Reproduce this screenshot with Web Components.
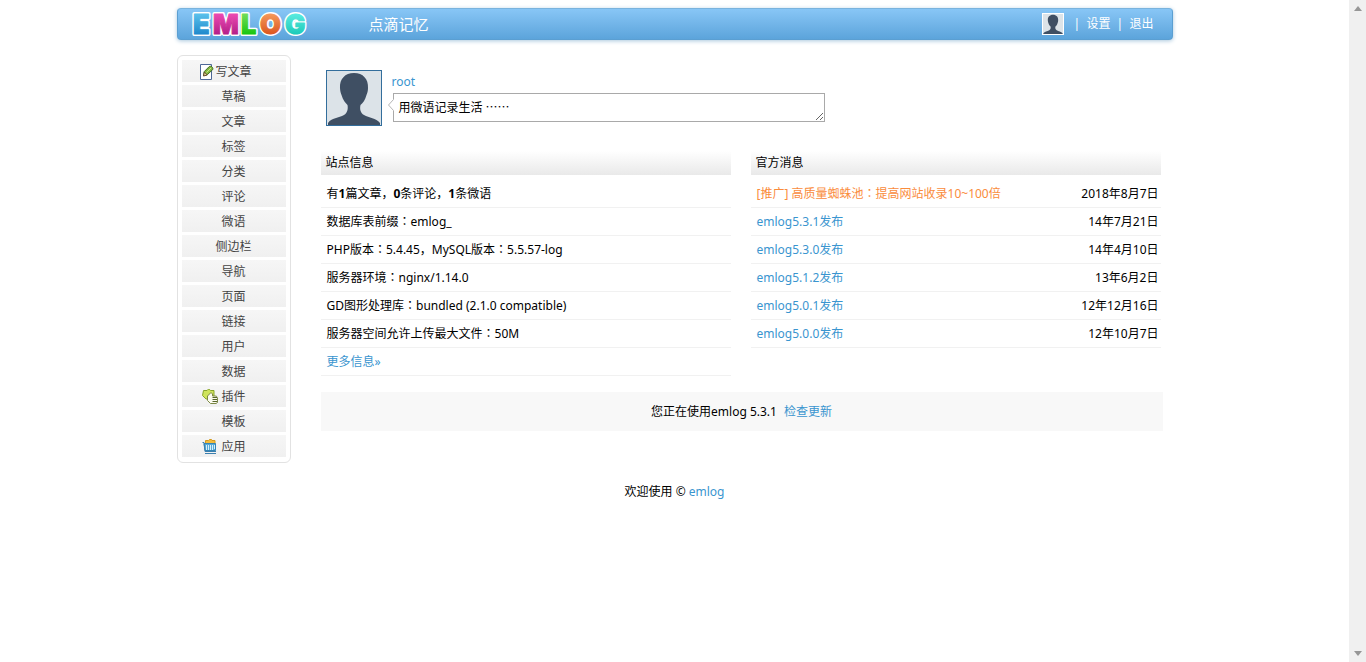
<!DOCTYPE html>
<html lang="zh-CN">
<head>
<meta charset="utf-8">
<title>点滴记忆 - emlog</title>
<style>
html, body { margin: 0; min-height: 100%; background: #fff; }
body { font: 12px/20px "Noto Sans", "Noto Sans CJK SC", sans-serif; color: #000; }
</style>
</head>
<body>
<emlog-admin></emlog-admin>
<script>
const define = (name, html, setup) => customElements.define(name, class extends HTMLElement {
  constructor() {
    super();
    const t = document.createElement('template');
    t.innerHTML = html;
    this.attachShadow({ mode: 'open' }).append(t.content.cloneNode(true));
  }
  connectedCallback() { if (setup) setup(this, this.shadowRoot); }
});
const linkStyle = 'a{color:#3a95cf;text-decoration:none}a:hover{text-decoration:underline}';

define('user-avatar', `
<style>
:host{display:block;box-sizing:border-box;background:#dce3e8}
svg{display:block;width:100%;height:100%}
</style>
<svg viewBox="0 0 54 54" aria-hidden="true"><rect width="54" height="54" fill="#dce3e8"/>
<path fill="#3f4f63" d="M27 2C18 2 12.500 8 13 17c.1 3 .8 5 1.500 7 1.500 5 4 8 6 10 .8 4-.2 8-3.500 10C12 47 4 47 1 52v2h52v-2c-4-5-11-5-16-8-3.500-2-4.500-6-3.500-10 2.500-2 4.500-5 6-10 .8-2 1.500-4 1.500-7C41.500 8 36 2 27 2z"/></svg>`);

const letters = [['E', 3, '#58bfea', '#2089cc'], ['M', 23, '#ea48b0', '#b31f88'], ['L', 51, '#70dc58', '#18c610'], ['O', 70, '#f49658', '#da5620'], ['G', 95, '#58eade', '#1ccab8']];
define('brand-logo', `
<style>
:host{display:block}
svg{display:block;width:122px;height:30px;overflow:visible}
text{font:900 27px Inter,sans-serif;stroke-width:1px;stroke-linejoin:round}
.halo{stroke:#fff;stroke-width:4px;fill:#fff}
</style>
<svg viewBox="0 0 122 30" role="img" aria-label="EMLOG">
<defs>${letters.map(([c, , top, end]) => `<linearGradient id="g${c}" x2="0" y2="1"><stop offset=".2" stop-color="${top}"/><stop offset=".8" stop-color="${end}"/></linearGradient>`).join('')}</defs>
${letters.map(([c, x]) => `<text class="halo" aria-hidden="true" x="${x}" y="25">${c}</text>`).join('')}
${letters.map(([c, x]) => `<text x="${x}" y="25" fill="url(#g${c})" stroke="url(#g${c})">${c}</text>`).join('')}
</svg>`);

define('top-bar', `
<style>
:host{display:flex;align-items:center;height:32px;box-sizing:border-box;padding:0 18px 0 12px;border:1px solid #5b9fd2;border-top-color:#79b3dd;border-radius:4px;
background:linear-gradient(#88c6f6,#5ca4db);box-shadow:0 1px 4px #a9c7dd;color:#fff}
a{color:#fff;text-decoration:none}
.title{margin-left:57px;font-size:15px}
nav{margin-left:auto;display:flex;align-items:center;gap:9px}
user-avatar{width:22px;height:22px;border:1px solid #fff}
.sep{width:4px;text-align:center}
.sep.tight{margin-left:-3px}
</style>
<brand-logo></brand-logo>
<a class="title" href="#">点滴记忆</a>
<nav><a href="#" aria-label="root"><user-avatar></user-avatar></a><span class="sep">|</span><a href="#">设置</a><span class="sep tight">|</span><a href="#">退出</a></nav>`);

define('menu-item', `
<style>
:host{display:block}
a{display:flex;align-items:center;justify-content:center;gap:3px;box-sizing:border-box;height:22px;padding-top:2px;color:#444;text-decoration:none;background:linear-gradient(#f6f6f6,#f0f0f0)}
a:hover{background:#e8f2fa}
::slotted(svg){display:block;width:16px;height:16px;margin-left:-19px}
::slotted(svg.wide){margin-left:-16px;margin-right:-3px}
</style>
<a href="#"><slot name="icon"></slot><span><slot></slot></span></a>`);

define('side-menu', `
<style>
:host{display:flex;flex-direction:column;gap:3px;box-sizing:border-box;width:114px;flex:none;padding:4px 4px 5px;border:1px solid #e2e2e2;border-radius:6px}
</style>
<menu-item><svg slot="icon" class="wide" viewBox="0 0 16 16" aria-hidden="true"><path fill="#fff" stroke="#4d6796" d="M1.500.5h11v15h-11z"/><path fill="#84b840" stroke="#3d6b1e" d="m4.500 11.500.8-4 5-5c2-1 4 1 3.500 3l-5.300 5z"/><path fill="#ead49c" stroke="#634c2a" d="m4.500 12 .8-4 3 3z"/><path stroke="#c8e889" d="m7.500 8.500 4.500-4.500"/></svg>写文章</menu-item>
<menu-item>草稿</menu-item><menu-item>文章</menu-item><menu-item>标签</menu-item><menu-item>分类</menu-item><menu-item>评论</menu-item><menu-item>微语</menu-item><menu-item>侧边栏</menu-item><menu-item>导航</menu-item><menu-item>页面</menu-item><menu-item>链接</menu-item><menu-item>用户</menu-item><menu-item>数据</menu-item>
<menu-item><svg slot="icon" viewBox="0 0 16 16" aria-hidden="true"><path fill="#cfe45c" stroke="#88a52c" d="M1.500 1.500H5c.5-1.500 3-1.500 3.500 0H12v8.500H4L.5 6.500z"/><path fill="#fbfbf0" stroke="#7d8a45" d="M5.500 7 9 3.500 10.500 5v2H13c2 0 2.500 1 2.500 3v3.500l-1.500 1H8.500l-3-3z"/><path stroke="#57652d" d="M10.500 8.500H15M10.500 10.500H15M10.500 12.500H15"/></svg>插件</menu-item>
<menu-item>模板</menu-item>
<menu-item><svg slot="icon" viewBox="0 0 16 16" aria-hidden="true"><path fill="#f4bd3c" stroke="#d39a22" d="M3.500 4.500v-3h3l1-1h2l.5 1H13v3z"/><path fill="#58aad8" stroke="#3585b5" d="M2 4.500h11.500v7H3z"/><path fill="none" stroke="#d6f0fa" d="M4.500 6v5M6.500 6v5M8.500 6v5M10.500 6v5M12.500 6v4"/><path fill="none" stroke="#3b7fae" d="M.5 3.500H2l1 9h11M3 14.500h11"/></svg>应用</menu-item>`);

define('micro-post', `
<style>
${linkStyle}
:host{display:flex;gap:10px;align-items:flex-start;padding-left:5px}
user-avatar{width:56px;height:56px;flex:none;border:1px solid #336e9c}
.body{display:flex;flex-direction:column;gap:1px;flex:0 1 433px;padding-top:2px}
a{display:block}
.bubble{position:relative;margin-left:1px}
textarea{display:block;box-sizing:border-box;width:100%;height:29px;margin:0;padding:4px 5px;border:1px solid #a9a9a9;outline:0;background:#fff;color:#000;font:inherit;overflow:hidden;resize:both}
svg{position:absolute;left:-5px;top:6px;width:6px;height:12px}
</style>
<user-avatar></user-avatar>
<div class="body"><a href="#">root</a><div class="bubble"><textarea aria-label="微语">用微语记录生活 ⋯⋯</textarea><svg viewBox="0 0 6 12" aria-hidden="true"><path fill="#fff" d="M6 0v12L0 6z"/><path fill="none" stroke="#b5b5b5" d="M5.500.5.500 6l5 5.500"/></svg></div></div>`);

define('info-panel', `
<style>
:host{display:block;flex:1 1 0;min-width:0}
h3{margin:0 0 5px;padding:0 5px;height:24px;line-height:24px;font-size:12px;font-weight:400;background:linear-gradient(#fff,#e9e9e9)}
ul{list-style:none;margin:0;padding:0}
</style>
<h3><slot name="title"></slot></h3><ul><slot></slot></ul>`);

define('info-row', `
<style>
:host{display:flex;justify-content:space-between;gap:16px;box-sizing:border-box;height:28px;line-height:27px;padding:0 2px 0 6px;border-bottom:1px solid #f1f1f1}
</style>
<span><slot></slot></span><slot name="date"></slot>`, host => host.setAttribute('role', 'listitem'));

define('version-bar', `
<style>
${linkStyle}
:host{display:block;margin-top:16px;height:39px;line-height:39px;text-align:center;background:#f8f8f8}
a{margin-left:7px}
</style>
<span>您正在使用emlog 5.3.1</span><a href="#">检查更新</a>`);

define('window-scrollbar', `
<style>
:host{display:flex;flex-direction:column;justify-content:space-between;align-items:center;box-sizing:border-box;flex:none;width:17px;height:100vh;padding:6px 0;background:#f0f0f0;position:sticky;top:0}
svg{display:block;width:8px;height:5px}
</style>
<svg viewBox="0 0 8 5" aria-hidden="true"><path fill="#969696" d="M4 0l4 5H0z"/></svg><svg viewBox="0 0 8 5" aria-hidden="true"><path fill="#969696" d="M0 0h8L4 5z"/></svg>`);

const news = [['emlog5.3.1发布','14年7月21日'],['emlog5.3.0发布','14年4月10日'],['emlog5.1.2发布','13年6月2日'],['emlog5.0.1发布','12年12月16日'],['emlog5.0.0发布','12年10月7日']];
// Full-width colons sit in the middle of their cell.
const centred = text => text.replace(/：/g, '<span class="punct" lang="zh-TW">$&</span>');
define('emlog-admin', `
<style>
${linkStyle}
:host{display:flex;align-items:flex-start}
.page{flex:1;min-width:0;padding:8px 16px}
.wrap{max-width:996px;margin:0 auto}
.columns{display:flex;align-items:flex-start;gap:30px;margin-top:15px}
main{flex:1;min-width:0;padding:15px 10px 0 0}
.panels{display:flex;gap:20px;margin:25px 2px 0 0}
.punct{font-family:"Noto Sans CJK TC",sans-serif;line-height:1}
a.promo{color:#fa8c3c}
footer{margin-top:19px;text-align:center}
</style>
<div class="page"><div class="wrap">
<top-bar></top-bar>
<div class="columns">
<side-menu></side-menu>
<main>
<micro-post></micro-post>
<div class="panels">
<info-panel><span slot="title">站点信息</span>
${['有<b>1</b>篇文章，<b>0</b>条评论，<b>1</b>条微语', '数据库表前缀：emlog_', 'PHP版本：5.4.45，MySQL版本：5.5.57-log', '服务器环境：nginx/1.14.0', 'GD图形处理库：bundled (2.1.0 compatible)', '服务器空间允许上传最大文件：50M', '<a href="#">更多信息»</a>'].map(t => `<info-row>${centred(t)}</info-row>`).join('')}
</info-panel>
<info-panel><span slot="title">官方消息</span>
<info-row><a class="promo" href="#">${centred('[推广] 高质量蜘蛛池：提高网站收录10~100倍')}</a><span slot="date">2018年8月7日</span></info-row>
${news.map(([t, d]) => `<info-row><a href="#">${t}</a><span slot="date">${d}</span></info-row>`).join('')}
</info-panel>
</div>
<version-bar></version-bar>
</main>
</div>
<footer>欢迎使用 © <a href="#">emlog</a></footer>
</div></div>
<window-scrollbar></window-scrollbar>`);
</script>
</body>
</html>
